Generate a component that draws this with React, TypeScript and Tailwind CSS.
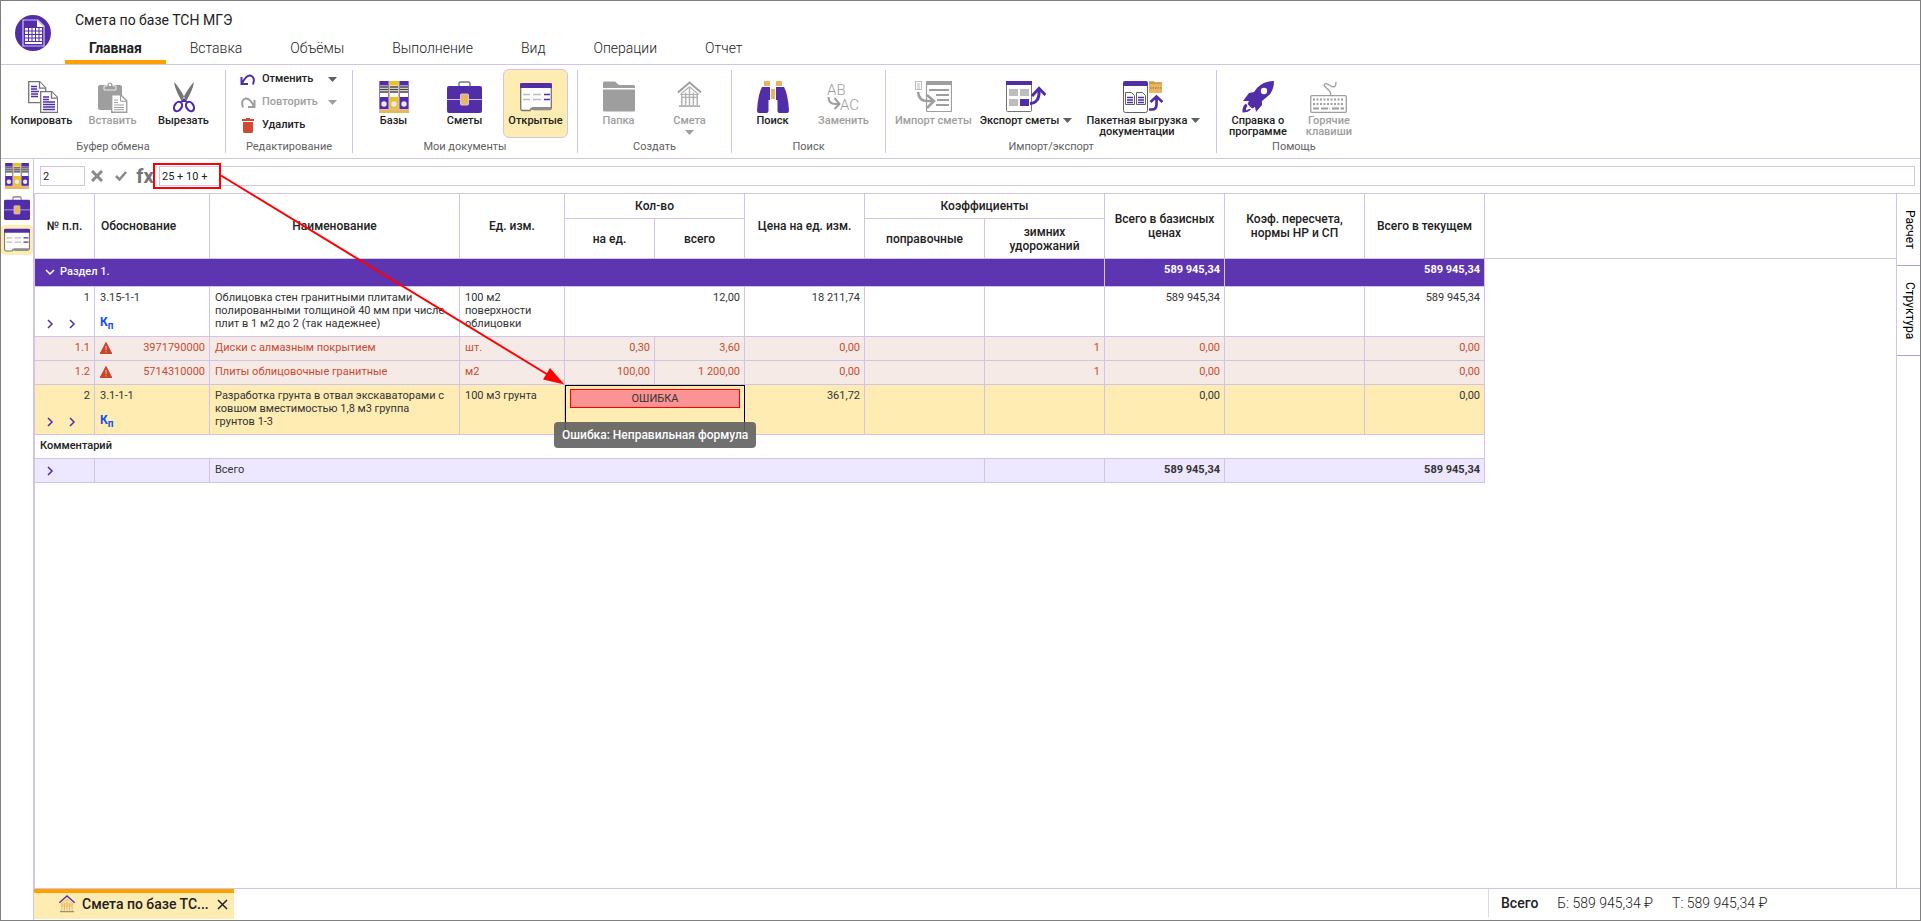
import React, { useState } from 'react';

const TABS = ['Главная', 'Вставка', 'Объёмы', 'Выполнение', 'Вид', 'Операции', 'Отчет'];

const LogoIcon = () => (
  <svg width="36" height="36" viewBox="0 0 36 36">
    <circle cx="18" cy="18" r="18" fill="#512da8" />
    <path d="M8 5h15l6 6v20H8z" fill="#512da8" stroke="#d1c4e9" strokeWidth="1.2" />
    <path d="M22 5v7h7z" fill="#fff" />
    <path d="M10 13h17v13H10z" fill="#fff" />
    <path d="M10 16h17M10 19.5h17M10 23h17M13.5 13v13M17 13v13M20.5 13v13M24 13v13" stroke="#512da8" />
    <path d="M10 28h17" stroke="#fff" strokeWidth="2" />
  </svg>
);

const CopyIcon = () => (
  <svg width="32" height="32" viewBox="0 0 32 32" fill="#fff" strokeWidth="1.3">
    <path d="M2.7.7h11l6 6v15h-17z" stroke="#757575" />
    <path d="M13.5.7v6.5h6" stroke="#757575" />
    <path d="M5 5.5h6M5 8h6M5 10.5h8M5 13h7M5 15.5h7" stroke="#512da8" />
    <path d="M14.7 10.7h11l6 6v14.6h-17z" stroke="#757575" />
    <path d="M25.5 10.7v6.5h6" stroke="#757575" />
    <path d="M17 16h6M17 18.5h6M17 21h12M17 23.5h12M17 26h12M17 28.5h12" stroke="#512da8" />
  </svg>
);

const PasteIcon = () => (
  <svg width="32" height="32" viewBox="0 0 32 32">
    <rect x="1" y="4" width="24" height="25" rx="2" fill="#9e9e9e" />
    <path d="M7 5h3c0-5 6-5 6 0h3v4H7z" fill="#9e9e9e" stroke="#fff" strokeWidth=".8" />
    <circle cx="13" cy="4" r="1.2" fill="#fff" />
    <path d="M14.7 13.7h9l6 6v11.6h-15z" fill="#fff" stroke="#9e9e9e" strokeWidth="1.4" />
    <path d="M23.5 13.7v6.5h6M17 19h4M17 21.5h4M17 24h10M17 26.5h10M17 28.7h10" fill="none" stroke="#9e9e9e" />
  </svg>
);

const CutIcon = () => (
  <svg width="32" height="32" viewBox="0 0 32 32">
    <path d="M6 1c3 3 9 11 12 19l-4 1C11 15 7 8 6 1zM26 1c-3 3-9 11-12 19l4 1C21 15 25 8 26 1z" fill="#757575" />
    <path d="M16 17l3.5 4h-7z" fill="#512da8" />
    <ellipse cx="10" cy="25.5" rx="3.6" ry="5" transform="rotate(30 10 25.5)" fill="none" stroke="#512da8" strokeWidth="2.2" />
    <ellipse cx="22" cy="25.5" rx="3.6" ry="5" transform="rotate(-30 22 25.5)" fill="none" stroke="#512da8" strokeWidth="2.2" />
  </svg>
);

const BooksIcon = ({ size = 32 }: { size?: number }) => (
  <svg width={size} height={size} viewBox="0 0 32 32">
    <path d="M1 0h30v29H1z" fill="#d1c4e9" />
    {[1.5, 11.5, 21.5].map((x, i) => (
      <g key={x}>
        <rect x={x} y="0" width="9" height="28" fill={i === 1 ? '#e9c31f' : '#512da8'} />
        <rect x={x + 0.5} y="4.5" width="8" height="11.5" fill="#fff" />
        <path d={`M${x + 0.5} 6h8M${x + 0.5} 8.5h8M${x + 0.5} 11h8`} stroke="#424242" strokeWidth="1.5" />
        <circle cx={x + 4.5} cy="23" r="2.7" fill="#ede7f6" />
      </g>
    ))}
    <rect x="1" y="28.5" width="30" height="3.5" fill="#e9b55f" />
  </svg>
);

const BriefcaseIcon = ({ small = false }: { small?: boolean }) => (
  <svg width={small ? 26 : 35} height={small ? 24 : 32} viewBox="0 0 35 32">
    <path d="M12 5V2.5Q12 1 13.5 1h8Q23 1 23 2.5V5" fill="none" stroke="#757575" strokeWidth="1.4" />
    <rect x="0" y="5" width="35" height="27" rx="2" fill="#512da8" />
    <path d="M0 18.5h35" stroke="#d1c4e9" />
    <rect x="13.5" y="13" width="8" height="11" rx="1" fill="#e9b55f" stroke="#d1c4e9" />
  </svg>
);

const OpenedIcon = ({ small = false }: { small?: boolean }) => (
  <svg width={small ? 26 : 32} height={small ? 24 : 32} viewBox={small ? '0 2 32 28' : '0 0 32 32'}>
    <path d="M.7 3h30.6v23.5q0 2-2 2H14l-3-1-1 2H2.5Q.7 29.5.7 27z" fill="#fff" stroke="#757575" strokeWidth="1.3" />
    <path d="M10 29l2-3h19v1q0 2-2 2z" fill="#8d8d8d" />
    <path d="M0 4q0-2 2-2h28q2 0 2 2v3H0z" fill="#512da8" />
    <path d="M3 13.5h7M13 13.5h8M3 18.5h7M13 18.5h8" stroke="#bdbdbd" strokeWidth="1.5" />
    <path d="M24 13.5h6M24 18.5h6" stroke="#512da8" strokeWidth="1.5" />
  </svg>
);

const FolderIcon = () => (
  <svg width="32" height="32" viewBox="0 0 32 32" fill="#9e9e9e">
    <path d="M0 2Q0 .5 1.5.5H12L16 4h14.5Q32 4 32 5.5V7H0z" />
    <path d="M0 8.5h32V29q0 1.5-1.5 1.5h-29Q0 30.5 0 29z" />
  </svg>
);

const HouseIcon = ({ size = 32, roof, wall, base }: { size?: number; roof: string; wall: string; base: string }) => (
  <svg width={size} height={size} viewBox="3 -3 26 28" fill="none">
    <path d="M4 9L16-1.5 28 9" stroke={roof} strokeWidth="2" />
    <path d="M6.5 11L16 3l9.5 8M7 11h18" stroke={wall} strokeWidth="1.2" />
    <path d="M8 11v11M12 9v13M16 4v18M20 9v13M24 11v11M8 14h16" stroke={wall} strokeWidth="1.5" />
    <path d="M5 23h22" stroke={base} strokeWidth="1.5" />
  </svg>
);

const SearchIcon = () => (
  <svg width="32" height="32" viewBox="0 0 32 32">
    <path d="M7 0h6v5H7zM19 0h6v5h-6zM14 8h4v10h-4z" fill="#e9b55f" />
    <path d="M5 6h8v13h-1.5v11q0 2-2 2H2q-2 0-2-2.5Q1 13 5 6zM27 6h-8v13h1.5v11q0 2 2 2H30q2 0 2-2.5Q31 13 27 6z" fill="#512da8" />
  </svg>
);

const ReplaceIcon = () => (
  <svg width="33" height="32" viewBox="0 0 33 32">
    <text x="0" y="14" fontSize="15" fontWeight="300" fill="#9e9e9e">AB</text>
    <text x="13" y="29" fontSize="15" fontWeight="300" fill="#9e9e9e">AC</text>
    <path d="M1.5 16q0 7 7 7h3M7.5 17l5 6-5 5" fill="none" stroke="#9e9e9e" strokeWidth="2" />
  </svg>
);

const ImportIcon = () => (
  <svg width="37" height="32" viewBox="0 0 37 32" fill="none">
    <rect x=".5" y=".5" width="6" height="8" stroke="#bdbdbd" />
    <path d="M2 3h3M2 5h3M2 7h3" stroke="#9e9e9e" strokeWidth=".7" />
    <rect x="11.5" y="1" width="25" height="29.5" rx="1" stroke="#9e9e9e" strokeWidth="1.2" />
    <path d="M11 0h26v4H11z" fill="#9e9e9e" />
    <path d="M14 9h20M21 14h13M22 19h12M21 24h13" stroke="#9e9e9e" strokeWidth="2" />
    <path d="M3 11q1 9 9 9h6" stroke="#9e9e9e" strokeWidth="2.5" />
    <path d="M12 14l7 6-7 7" stroke="#9e9e9e" strokeWidth="2.5" />
  </svg>
);

const ExportIcon = () => (
  <svg width="40" height="32" viewBox="0 0 40 32" fill="none">
    <rect x=".5" y="1" width="25" height="29.5" rx="1" stroke="#757575" />
    <path d="M0 0h26v4H0z" fill="#512da8" />
    <path d="M3 8h9v7H3zM14 8h9v7h-9zM3 18h9v7H3z" fill="#bdbdbd" />
    <path d="M14 18h9v7h-9z" fill="#512da8" />
    <path d="M24 22.5q10-.5 9-14" stroke="#512da8" strokeWidth="3" />
    <path d="M26 15l7-7.5 6.5 6.5" stroke="#512da8" strokeWidth="3" />
  </svg>
);

const BatchIcon = () => (
  <svg width="40" height="32" viewBox="0 0 40 32" fill="none">
    <rect x=".5" y="1" width="24" height="30.5" rx="2" stroke="#616161" />
    <path d="M0 5V2q0-2 2-2h21q2 0 2 2v3z" fill="#512da8" />
    <path d="M2.5 11.5h6l3 3v9h-9zM13.5 11.5h6l3 3v9h-9z" stroke="#616161" />
    <path d="M4 16.5h6M4 19h6M4 21.5h6M15 16.5h6M15 19h6M15 21.5h6" stroke="#512da8" strokeWidth="1.3" />
    <path d="M26 0h5l1 1.5h7V12H26z" fill="#e9b55f" />
    <path d="M26 2h13" stroke="#a9812f" />
    <path d="M27 7h12" stroke="#8d6e2f" strokeDasharray="1.5 1" />
    <path d="M26 28.5h3q4.5 0 4.5-5V17M27.5 21l6-5.5 6 5.5" stroke="#512da8" strokeWidth="2.7" />
  </svg>
);

const RocketIcon = () => (
  <svg width="32" height="32" viewBox="0 0 32 32">
    <path d="M32 0Q22 0 15 7l-3 4-5 1-6 8h6l-1.5 3 4.5 4.5 3-1.5 1 5 6-7v-4l6-5Q32 10 32 0z" fill="#512da8" />
    <circle cx="22" cy="10" r="3.2" fill="#fff" />
    <path d="M4 22.5Q0 25 .5 31.5 7 31.5 9 28H7l-3 1.5q-.5-3 1.5-4.5z" fill="#512da8" />
  </svg>
);

const KeyboardIcon = () => (
  <svg width="37" height="32" viewBox="0 0 37 32" fill="none" stroke="#9e9e9e">
    <path d="M20 15q2-3-2-6.5t-4-4.5q1-3 6 .5 6 4 6-3.5" strokeWidth="1.3" />
    <rect x=".7" y="14.7" width="35.6" height="16.6" rx="1" strokeWidth="1.3" />
    <path d="M3 18.5h31M3 23h31" strokeWidth="1.8" strokeDasharray="2 1.5" />
    <path d="M3 27.5h6M11 27.5h9M22 27.5h12" strokeWidth="1.8" strokeDasharray="7 1.5" />
  </svg>
);

const Caret = ({ muted = false }: { muted?: boolean }) => (
  <svg width="9" height="5" viewBox="0 0 9 5" className="shrink-0">
    <path d="M0 0h9L4.5 5z" fill={muted ? '#9e9e9e' : '#616161'} />
  </svg>
);

const Chevron = ({ color = '#512da8', down = false }: { color?: string; down?: boolean }) => (
  <svg width="10" height="10" viewBox="0 0 10 10" fill="none" stroke={color} strokeWidth="1.5">
    <path d={down ? 'M1 3l4 4 4-4' : 'M3 1l4 4-4 4'} />
  </svg>
);

const WarningIcon = () => (
  <svg width="12" height="12" viewBox="0 0 12 12">
    <path d="M6 .5L12 12H0z" fill="#c9432a" stroke="#c9432a" strokeLinejoin="round" />
    <path d="M6 4v4M6 9.2v1.3" stroke="#f5a08f" strokeWidth="1.3" />
  </svg>
);

interface RibbonButtonProps {
  icon: React.ReactNode;
  lines: string[];
  disabled?: boolean;
  active?: boolean;
  wide?: boolean;
  caret?: 'side' | 'below';
}

const RibbonButton: React.FC<RibbonButtonProps> = ({ icon, lines, disabled, active, wide, caret }) => (
  <button
    type="button"
    disabled={disabled}
    className={`flex h-[69px] min-w-[65px] flex-col items-center rounded-md border pt-[11px] text-[11px] leading-[11px] font-medium whitespace-nowrap ${
      active ? 'border-[#d1c4e9] bg-[#ffecb3]' : 'border-transparent'
    } ${disabled ? 'text-[#9e9e9e]' : 'text-[#212121]'} ${wide ? 'px-1.5' : ''}`}
  >
    <span className="flex h-[34px] items-start">{icon}</span>
    <span className="flex gap-1">
      <span>
        {lines.map((line) => (
          <span key={line} className="block">{line}</span>
        ))}
      </span>
      {caret === 'side' && <span className="pt-[3px]"><Caret /></span>}
    </span>
    {caret === 'below' && <span className="mt-1"><Caret muted /></span>}
  </button>
);

const Group = ({ label, children, last = false }: { label: string; children: React.ReactNode; last?: boolean }) => (
  <>
    <div className="flex flex-col pt-1">
      <div className="flex gap-1.5 pr-[9px] pl-2">{children}</div>
      <div className="text-center text-[11px] leading-[18px] text-[#616161]">{label}</div>
    </div>
    {!last && <div className="my-[5px] w-px bg-[#d1c4e9]" />}
  </>
);

const EditRow = ({ icon, text, caret, disabled = false }: { icon: React.ReactNode; text: string; caret?: boolean; disabled?: boolean }) => (
  <button
    type="button"
    disabled={disabled}
    className={`flex h-[23px] w-full items-center pb-0.5 text-[11px] font-medium ${disabled ? 'text-[#9e9e9e]' : 'text-[#212121]'}`}
  >
    <span className="mr-1.5 flex w-4 justify-center">{icon}</span>
    {text}
    {caret && <span className="ml-auto"><Caret muted={disabled} /></span>}
  </button>
);

const TH = 'border-r border-b border-[#d1c4e9] px-[5px] text-center align-middle font-medium';
const TD = 'border-r border-b border-[#d1c4e9] pt-1 pr-1 pl-[5px] align-top';
const TD_NAME = 'border-r border-b border-[#d1c4e9] pt-1 pr-3 pl-[5px] align-top';

const Kp = () => (
  <div className="pt-3 text-[12px] font-bold text-[#1552f0]">
    К<sub className="text-[10px]">п</sub>
  </div>
);

const NumberCell = ({ n }: { n: string }) => (
  <td className={TD}>
    <div className="text-right">{n}</div>
    <div className="flex gap-3 pt-[15px] pl-[5px]">
      <button type="button" aria-label="Раскрыть"><Chevron /></button>
      <button type="button" aria-label="Подробнее"><Chevron /></button>
    </div>
  </td>
);

const resources = [
  { n: '1.1', code: '3971790000', name: 'Диски с алмазным покрытием', unit: 'шт.', per: '0,30', all: '3,60' },
  { n: '1.2', code: '5714310000', name: 'Плиты облицовочные гранитные', unit: 'м2', per: '100,00', all: '1 200,00' },
];

const EstimateTable = () => (
  <table className="w-full table-fixed border-separate border-spacing-0 text-[11px] leading-[13px] text-[#333]">
    <colgroup>
      <col className="w-[60px]" />
      <col className="w-[115px]" />
      <col className="w-[250px]" />
      <col className="w-[105px]" />
      <col className="w-[90px]" />
      <col className="w-[90px]" />
      <col className="w-[120px]" />
      <col className="w-[120px]" />
      <col className="w-[120px]" />
      <col className="w-[120px]" />
      <col className="w-[140px]" />
      <col className="w-[120px]" />
      <col />
    </colgroup>
    <thead className="text-[12px] leading-[14px] text-[#212121]">
      <tr className="h-[25px]">
        <th rowSpan={2} className={TH}>№ п.п.</th>
        <th rowSpan={2} className="border-r border-b border-[#d1c4e9] px-1.5 text-left align-middle font-medium">Обоснование</th>
        <th rowSpan={2} className={TH}>Наименование</th>
        <th rowSpan={2} className={TH}>Ед. изм.</th>
        <th colSpan={2} className={TH}>Кол-во</th>
        <th rowSpan={2} className={TH}>Цена на ед. изм.</th>
        <th colSpan={2} className={TH}>Коэффициенты</th>
        <th rowSpan={2} className={TH}>Всего в базисных ценах</th>
        <th rowSpan={2} className={TH}>Коэф. пересчета, нормы НР и СП</th>
        <th rowSpan={2} className={TH}>Всего в текущем</th>
        <td rowSpan={2} className="border-b border-[#d1c4e9]" />
      </tr>
      <tr className="h-10">
        <th className={TH}>на ед.</th>
        <th className={TH}>всего</th>
        <th className={TH}>поправочные</th>
        <th className={TH}>зимних удорожаний</th>
      </tr>
    </thead>
    <tbody>
      <tr className="h-7 bg-[#5e35b1] text-white">
        <td colSpan={9} className="border-r border-b border-[#d1c4e9] pb-0.5 pl-2.5 align-middle font-medium">
          <button type="button" className="flex items-center gap-[5px]">
            <Chevron color="#fff" down />
            Раздел 1.
          </button>
        </td>
        <td className={`${TD} text-right font-bold`}>589 945,34</td>
        <td colSpan={2} className={`${TD} text-right font-bold`}>589 945,34</td>
        <td className="bg-white" />
      </tr>
      <tr className="h-[50px]">
        <NumberCell n="1" />
        <td className={TD}>
          <div>3.15-1-1</div>
          <Kp />
        </td>
        <td className={TD_NAME}>Облицовка стен гранитными плитами полированными толщиной 40 мм при числе плит в 1 м2 до 2 (так надежнее)</td>
        <td className={TD}>100 м2 поверхности облицовки</td>
        <td colSpan={2} className={`${TD} text-right`}>12,00</td>
        <td className={`${TD} text-right`}>18 211,74</td>
        <td className={TD} />
        <td className={TD} />
        <td className={`${TD} text-right`}>589 945,34</td>
        <td className={TD} />
        <td className={`${TD} text-right`}>589 945,34</td>
        <td />
      </tr>
      {resources.map((r) => (
        <tr key={r.n} className="h-6 bg-[#f5eae6] text-[#cd4a31]">
          <td className={`${TD} text-right`}>{r.n}</td>
          <td className={TD}>
            <div className="flex items-center justify-between">
              <WarningIcon />
              {r.code}
            </div>
          </td>
          <td className={TD_NAME}>{r.name}</td>
          <td className={TD}>{r.unit}</td>
          <td className={`${TD} text-right`}>{r.per}</td>
          <td className={`${TD} text-right`}>{r.all}</td>
          <td className={`${TD} text-right`}>0,00</td>
          <td className={TD} />
          <td className={`${TD} text-right`}>1</td>
          <td className={`${TD} text-right`}>0,00</td>
          <td className={TD} />
          <td className={`${TD} text-right`}>0,00</td>
          <td className="bg-white" />
        </tr>
      ))}
      <tr className="h-[50px] bg-[#ffecb3]">
        <NumberCell n="2" />
        <td className={TD}>
          <div>3.1-1-1</div>
          <Kp />
        </td>
        <td className={TD_NAME}>Разработка грунта в отвал экскаваторами с ковшом вместимостью 1,8 м3 группа грунтов 1-3</td>
        <td className={TD}>100 м3 грунта</td>
        <td colSpan={2} className="relative border border-black px-1 pt-[3px] align-top">
          <div className="border border-[#f00] bg-[#fa9494] text-center leading-[17px]">ОШИБКА</div>
          <div
            role="tooltip"
            className="absolute top-9 -left-3 rounded bg-[#616161]/90 px-2 text-[12px] leading-[26px] font-medium whitespace-nowrap text-white"
          >
            Ошибка: Неправильная формула
          </div>
        </td>
        <td className={`${TD} text-right`}>361,72</td>
        <td className={TD} />
        <td className={TD} />
        <td className={`${TD} text-right`}>0,00</td>
        <td className={TD} />
        <td className={`${TD} text-right`}>0,00</td>
        <td className="bg-white" />
      </tr>
      <tr className="h-6">
        <td colSpan={12} className={`${TD} font-medium text-[#212121]`}>Комментарий</td>
        <td />
      </tr>
      <tr className="h-6 bg-[#ede7ff]">
        <td className="border-r border-b border-[#d1c4e9] pl-2.5 align-middle">
          <button type="button" aria-label="Раскрыть" className="block"><Chevron /></button>
        </td>
        <td className={TD} />
        <td colSpan={6} className={TD}>Всего</td>
        <td className={TD} />
        <td className={`${TD} text-right font-bold`}>589 945,34</td>
        <td colSpan={2} className={`${TD} text-right font-bold`}>589 945,34</td>
        <td className="bg-white" />
      </tr>
    </tbody>
  </table>
);

const SIDE_TAB = 'flex items-center justify-center border-b border-[#b39ddb] pt-4 pb-4 pl-0.5 [writing-mode:vertical-rl]';

export default function App() {
  const [formula, setFormula] = useState('25 + 10 +');
  const [row, setRow] = useState('2');
  const [tab, setTab] = useState(TABS[0]);

  return (
    <div className="relative flex min-h-screen flex-col border border-[#808080] bg-white font-[Roboto,sans-serif] text-[#212121]">
      <header className="flex h-16 border-b border-[#d1c4e9]">
        <div className="flex w-16 justify-center pt-3.5">
          <LogoIcon />
        </div>
        <div className="flex flex-1 flex-col">
          <h1 className="px-2.5 pt-[7px] text-[14px] leading-6">Смета по базе ТСН МГЭ</h1>
          <nav className="flex flex-1 text-[14px]">
            {TABS.map((name) => (
              <button
                key={name}
                type="button"
                onClick={() => setTab(name)}
                className={`border-b-4 px-6 pt-1 ${tab === name ? 'border-[#ffa000] font-bold' : 'border-transparent font-light'}`}
              >
                {name}
              </button>
            ))}
          </nav>
        </div>
      </header>

      <section className="flex h-[94px] border-b border-[#d1c4e9]">
        <Group label="Буфер обмена">
          <RibbonButton icon={<CopyIcon />} lines={['Копировать']} />
          <RibbonButton icon={<PasteIcon />} lines={['Вставить']} disabled />
          <RibbonButton icon={<CutIcon />} lines={['Вырезать']} />
        </Group>
        <Group label="Редактирование">
          <div className="w-[109px] px-1.5">
            <EditRow
              icon={
                <svg width="16" height="12" viewBox="0 0 16 12" fill="none" stroke="#512da8" strokeWidth="2">
                  <path d="M1.5 3v7H8M2 9.5Q6 1 10.5 1.5 15.5 3 13 10.5" />
                </svg>
              }
              text="Отменить"
              caret
            />
            <EditRow
              icon={
                <svg width="16" height="12" viewBox="0 0 16 12" fill="none" stroke="#9e9e9e" strokeWidth="2">
                  <path d="M14.5 3v7H8M14 9.5Q10 1 5.5 1.5 .5 3 3 10.5" />
                </svg>
              }
              text="Повторить"
              caret
              disabled
            />
            <EditRow
              icon={
                <svg width="12" height="15" viewBox="0 0 12 15" fill="#d14a2f">
                  <path d="M0 1h4V0h4v1h4v2H0zM1 4h10v9.5q0 1.5-1.5 1.5h-7Q1 15 1 13.5z" />
                </svg>
              }
              text="Удалить"
            />
          </div>
        </Group>
        <Group label="Мои документы">
          <RibbonButton icon={<BooksIcon />} lines={['Базы']} />
          <RibbonButton icon={<BriefcaseIcon />} lines={['Сметы']} />
          <RibbonButton icon={<OpenedIcon />} lines={['Открытые']} active />
        </Group>
        <Group label="Создать">
          <RibbonButton icon={<FolderIcon />} lines={['Папка']} disabled />
          <RibbonButton icon={<HouseIcon size={27} roof="#9e9e9e" wall="#b0b0b0" base="#9e9e9e" />} lines={['Смета']} disabled caret="below" />
        </Group>
        <Group label="Поиск">
          <RibbonButton icon={<SearchIcon />} lines={['Поиск']} />
          <RibbonButton icon={<ReplaceIcon />} lines={['Заменить']} disabled />
        </Group>
        <Group label="Импорт/экспорт">
          <RibbonButton icon={<ImportIcon />} lines={['Импорт сметы']} disabled />
          <RibbonButton icon={<ExportIcon />} lines={['Экспорт сметы']} caret="side" />
          <RibbonButton icon={<BatchIcon />} lines={['Пакетная выгрузка', 'документации']} caret="side" wide />
        </Group>
        <Group label="Помощь" last>
          <RibbonButton icon={<RocketIcon />} lines={['Справка о', 'программе']} />
          <RibbonButton icon={<KeyboardIcon />} lines={['Горячие', 'клавиши']} disabled />
        </Group>
      </section>

      <div className="flex flex-1">
        <aside className="flex w-[33px] flex-col gap-0.5 border-r border-[#d1c4e9] pt-0.5">
          <button type="button" aria-label="Базы" className="flex h-[30px] items-center justify-center">
            <BooksIcon size={26} />
          </button>
          <button type="button" aria-label="Сметы" className="flex h-[30px] items-center justify-center">
            <BriefcaseIcon small />
          </button>
          <button type="button" aria-label="Открытые" className="flex h-[30px] items-center justify-center rounded bg-[#ffecb3]">
            <OpenedIcon small />
          </button>
        </aside>

        <div className="flex min-w-0 flex-1 flex-col">
          <div className="flex h-[35px] items-center border-b border-[#d1c4e9] pr-[5px] pl-1.5">
            <input
              aria-label="Номер строки"
              value={row}
              onChange={(e) => setRow(e.target.value)}
              className="h-5 w-[45px] border border-[#d1c4e9] px-0.5 text-[11px] outline-none"
            />
            <button type="button" aria-label="Отменить ввод" className="flex w-6 justify-center">
              <svg width="12" height="12" viewBox="0 0 12 12" stroke="#8a8a8a" strokeWidth="3">
                <path d="M1 1l10 10M11 1L1 11" />
              </svg>
            </button>
            <button type="button" aria-label="Применить" className="flex w-6 justify-center">
              <svg width="12" height="10" viewBox="0 0 12 10" fill="none" stroke="#8a8a8a" strokeWidth="2.5">
                <path d="M1 5l3.5 3.5L11 1" />
              </svg>
            </button>
            <label htmlFor="formula" className="mr-0.5 w-6 text-center text-[20px] leading-5 font-bold text-[#757575]">fx</label>
            <input
              id="formula"
              value={formula}
              onChange={(e) => setFormula(e.target.value)}
              className="h-5 min-w-0 flex-1 border border-[#d1c4e9] px-0.5 text-[11px] outline-none"
            />
          </div>

          <main className="flex flex-1">
            <div className="min-w-0 flex-1 border-l border-[#d1c4e9]">
              <EstimateTable />
            </div>
            <div className="flex w-6 flex-col border-l border-[#d1c4e9] text-[12px] text-black">
              <button type="button" className={SIDE_TAB}>Расчет</button>
              <button type="button" className={SIDE_TAB}>Структура</button>
            </div>
          </main>

          <footer className="flex h-8 items-start border-t border-[#d1c4e9] text-[14px]">
            <div className="flex h-[30px] w-[200px] items-center border-t-4 border-[#ffa000] bg-[#ffecb3] pr-1.5 pb-1 pl-6 font-medium">
              <HouseIcon size={18} roof="#512da8" wall="#e9b55f" base="#757575" />
              <span className="ml-1.5 flex-1 whitespace-nowrap">Смета по базе ТС...</span>
              <button type="button" aria-label="Закрыть">
                <svg width="11" height="11" viewBox="0 0 11 11" stroke="#212121" strokeWidth="1.5">
                  <path d="M1 1l9 9M10 1l-9 9" />
                </svg>
              </button>
            </div>
            <div className="ml-auto flex h-7 w-[432px] items-center gap-[19px] border-l border-[#dcdcdc] pl-3">
              <span className="font-medium">Всего</span>
              <span className="font-light">Б: 589 945,34 ₽</span>
              <span className="font-light">Т: 589 945,34 ₽</span>
            </div>
          </footer>
        </div>
      </div>

      {/* callout from the formula box to the broken cell */}
      <svg className="pointer-events-none absolute top-0 left-0" width="600" height="400" viewBox="1 1 600 400" fill="none">
        <rect x="154" y="164" width="66" height="24" stroke="#f00" strokeWidth="2" />
        <path d="M221 175.5L550 376" stroke="#f00" strokeWidth="2" />
        <path d="M564.5 384.5L550 368l-7 11.5z" fill="#f00" />
      </svg>
    </div>
  );
}
